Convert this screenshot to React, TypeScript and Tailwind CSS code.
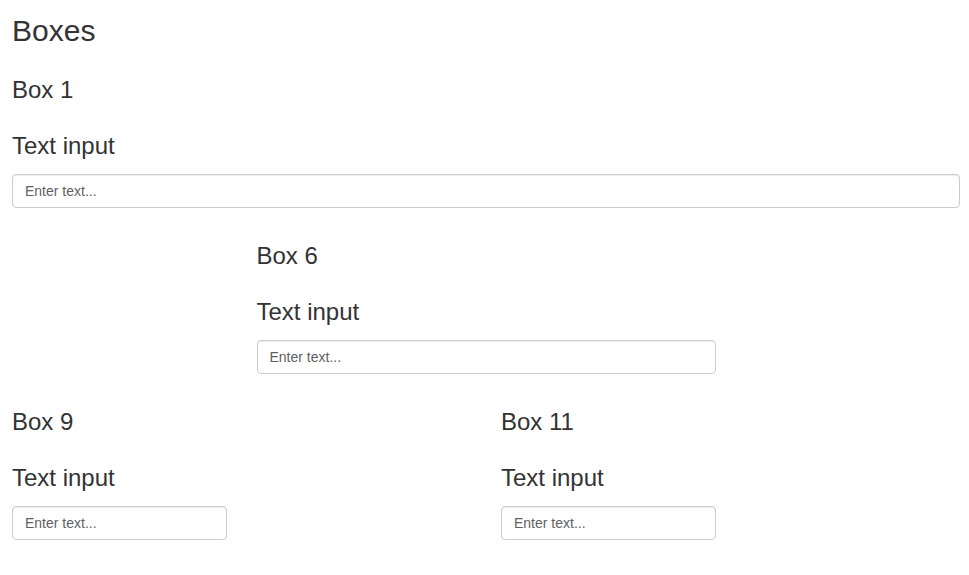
import React from "react";

function Box({ title, className }: { title: string; className: string }) {
  return (
    <div className={className}>
      <h3 className="m-0 text-[24px] leading-[26px] font-normal text-[#333]">{title}</h3>
      <h3 className="mt-[30px] mb-0 text-[24px] leading-[26px] font-normal text-[#333]">Text input</h3>
      <input
        type="text"
        placeholder="Enter text..."
        className="mt-[15px] block w-full h-[34px] px-[12px] py-[6px] text-[14px] leading-[20px] text-[#555] bg-white border border-[#ccc] rounded-[4px] shadow-[inset_0_1px_1px_rgba(0,0,0,0.075)] outline-none placeholder:text-[#5f5f5f]"
        style={{ fontFamily: '"Liberation Sans", Arial, sans-serif' }}
      />
    </div>
  );
}

export default function App() {
  return (
    <div
      className="w-[969px] min-h-[575px] bg-white pl-[12px] pr-[9px] text-[#333]"
      style={{ fontFamily: '"Liberation Sans", Arial, Helvetica, sans-serif' }}
    >
      <h2 className="mt-[14px] mb-0 text-[30px] leading-[33px] font-normal">Boxes</h2>
      <div className="mt-[30px] grid grid-cols-4 gap-x-[30px] gap-y-[35px]">
        <Box title="Box 1" className="col-span-4" />
        <Box title="Box 6" className="col-start-2 col-span-2" />
        <Box title="Box 9" className="col-start-1 col-span-1" />
        <Box title="Box 11" className="col-start-3 col-span-1" />
      </div>
    </div>
  );
}
